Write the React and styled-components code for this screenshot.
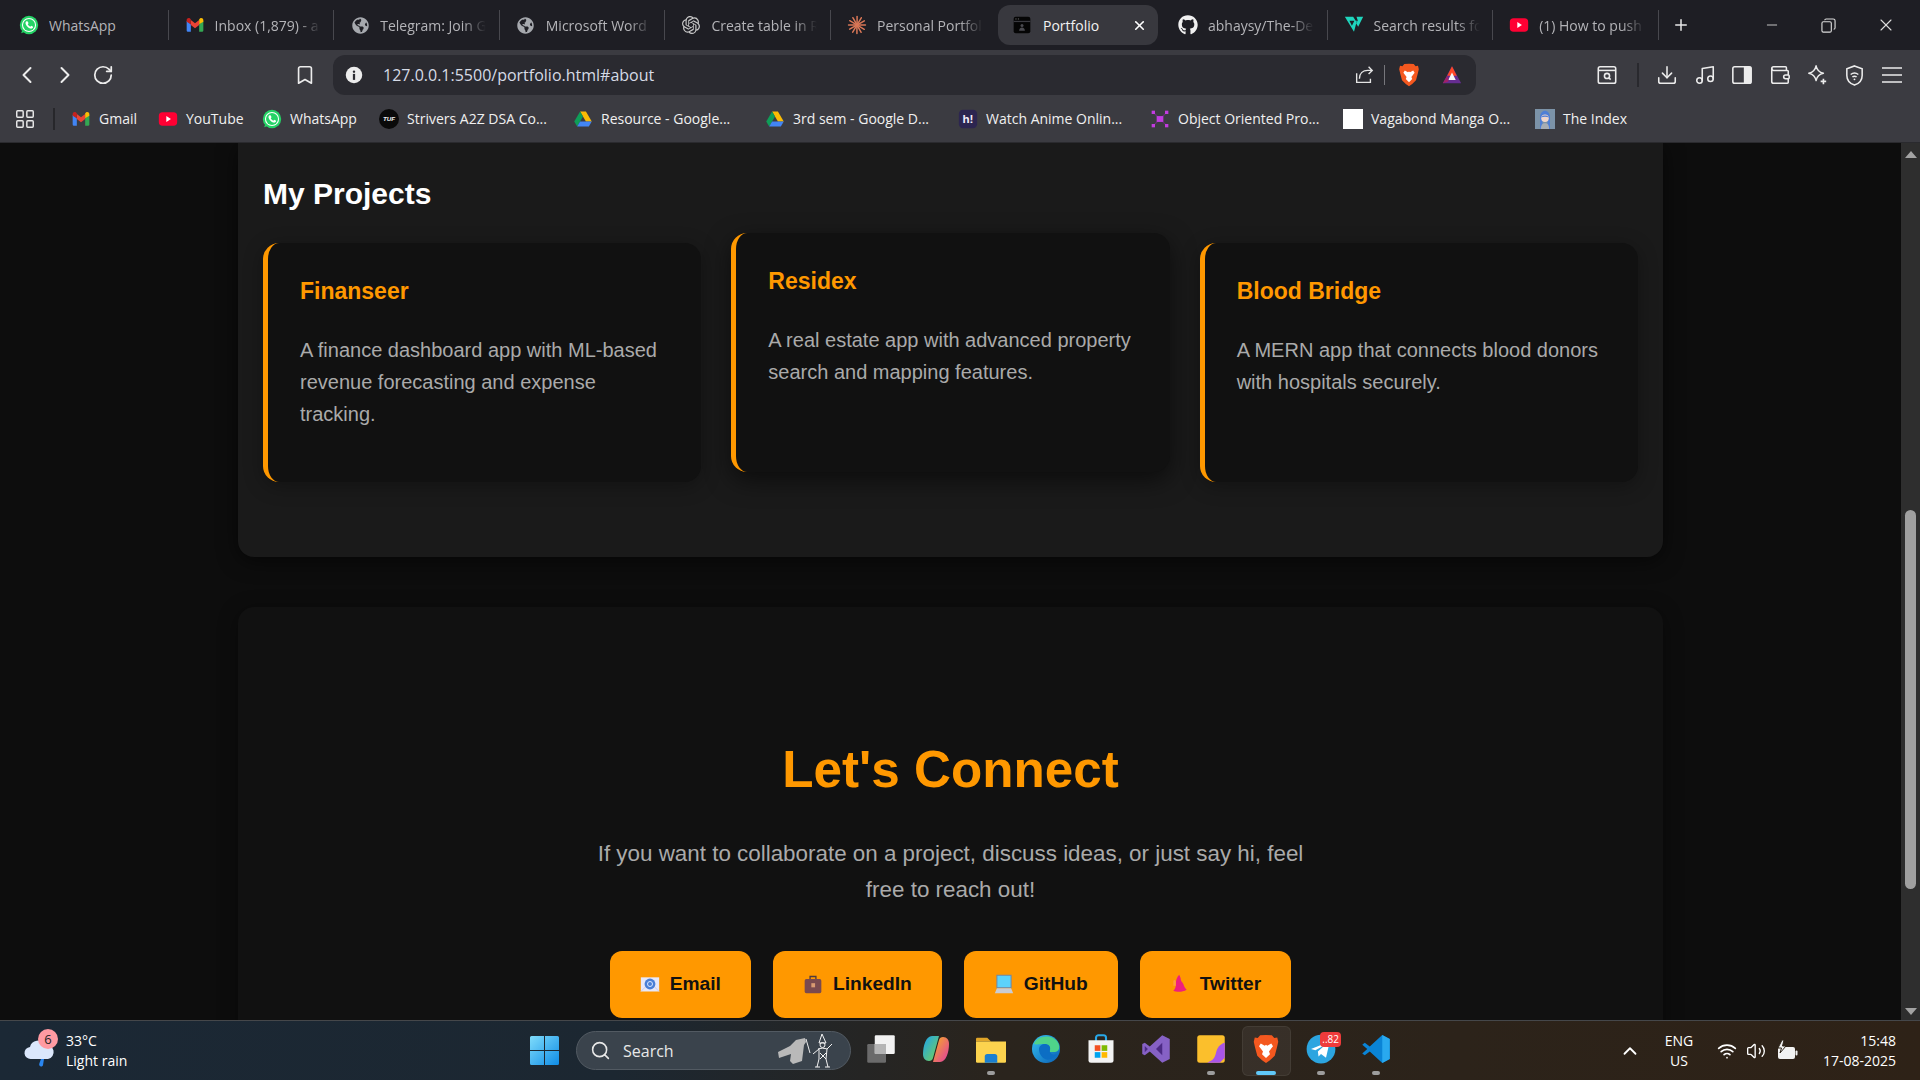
import React from "react";
import styled, { createGlobalStyle } from "styled-components";
import { ChevronLeft, ChevronRight, RotateCw, Bookmark, Download, Music, Wallet, Wifi, Volume2, ChevronUp, Search, Plus, X, Minus, LayoutGrid } from "lucide-react";
import { FaWhatsapp, FaGithub, FaGlobeAmericas } from "react-icons/fa";
import { SiOpenai } from "react-icons/si";

const Global = createGlobalStyle`
  html, body { margin: 0; padding: 0; background: #0d0d0d; overflow: hidden; }
  * { box-sizing: border-box; }
`;

const CHROME = `"Open Sans", "Noto Sans", sans-serif`;
const PAGE = `"Liberation Sans", Arial, sans-serif`;
const ORANGE = "#ff9800";

const Screen = styled.div`
  width: 1920px; height: 1080px; display: flex; flex-direction: column; overflow: hidden;
  font-family: ${CHROME};
`;

/* ---------- tabs ---------- */
const TabStrip = styled.div`
  height: 50px; flex: none; background: #1e1e24; display: flex; align-items: center; padding-left: 3px;
`;
const Tab = styled.div`
  position: relative; flex: none; height: 40px; display: flex; align-items: center;
  width: ${p => (p.$active ? "160px" : "165.6px")};
  margin: ${p => (p.$active ? "0 4px 0 1.4px" : "0")};
  padding-left: ${p => (p.$active ? "14px" : "16px")};
  gap: ${p => (p.$active ? "11px" : "10px")};
  background: ${p => (p.$active ? "#38383e" : "transparent")};
  border-radius: ${p => (p.$active ? "12px" : "0")};
  color: ${p => (p.$active ? "#f2f2f2" : "#b4b4b8")};
  font-size: 14px;
  &::after {
    content: "";
    display: ${p => (p.$sep ? "block" : "none")};
    position: absolute; right: 0; top: 5px; bottom: 5px; width: 1px; background: #48484e;
  }
`;
const TabTitle = styled.span`
  width: 106px; flex: none; white-space: nowrap; overflow: hidden;
  -webkit-mask-image: ${p => (p.$fade ? "linear-gradient(90deg,#000 78%,transparent 100%)" : "none")};
  mask-image: ${p => (p.$fade ? "linear-gradient(90deg,#000 78%,transparent 100%)" : "none")};
`;
const ActiveTitle = styled.span`
  flex: 1; white-space: nowrap;
`;
const TabClose = styled.span`
  display: flex; margin-right: 11px; color: #fff;
`;
const NewTab = styled.div`
  margin-left: 13px; display: flex; color: #e8e8e8;
`;
const WinControls = styled.div`
  margin-left: auto; display: flex; align-items: center; color: #dcdcdc; padding-right: 6px;
`;
const WinButton = styled.div`
  width: 57px; display: flex; justify-content: center;
`;
const Fav = styled.span`
  flex: none; width: 20px; height: 20px; display: flex; align-items: center; justify-content: center;
`;

/* ---------- toolbar ---------- */
const Toolbar = styled.div`
  height: 45px; flex: none; background: #3b3b41; display: flex; align-items: flex-end; padding-left: 8px; padding-right: 9px;
`;
const ToolSlot = styled.div`
  width: ${p => p.$w || "38px"}; height: 40px; flex: none; display: flex; align-items: center; justify-content: center; color: #ececec;
`;
const BookmarkSlot = styled(ToolSlot)`
  width: 22px; margin-left: 173px; margin-right: 17px;
`;
const UrlBar = styled.div`
  width: 1143px; height: 40px; flex: none; background: #2a2a30; border-radius: 12px;
  display: flex; align-items: center; padding: 0 12px 0 11px; color: #e4e4e4;
`;
const UrlText = styled.div`
  flex: 1; margin-left: 19px; font-size: 16px; color: #d6dbe6; white-space: nowrap;
`;
const UrlDivider = styled.span`
  width: 1px; height: 20px; background: #77777c; margin: 0 12px 0 9px;
`;
const BatSlot = styled(Fav)`
  width: 24px; height: 24px; margin-left: 19px;
`;
const LionSlot = styled(Fav)`
  width: 24px; height: 24px;
`;
const ToolRight = styled.div`
  margin-left: auto; display: flex; align-items: center; height: 40px;
`;
const ToolDivider = styled.span`
  width: 2px; height: 24px; background: #29292e; margin: 0 10px 0 10.5px;
`;

/* ---------- bookmarks ---------- */
const BookmarkBar = styled.div`
  height: 48px; flex: none; background: #3b3b41; display: flex; align-items: center; padding-left: 14px;
  border-bottom: 1px solid #2a2a2e; color: #f0f0f0; font-size: 14px;
`;
const AppsSlot = styled.span`
  width: 22px; display: flex; color: #e8e8e8;
`;
const BarDivider = styled.span`
  width: 2px; height: 22px; background: #27272b; margin: 0 16px 0 17px;
`;
const BookmarkItem = styled.div`
  width: ${p => p.$w}px; flex: none; display: flex; align-items: center; gap: 8px; white-space: nowrap;
`;

/* ---------- page ---------- */
const Viewport = styled.div`
  flex: 1; min-height: 0; display: flex; overflow: hidden; background: #0d0d0d; font-family: ${PAGE};
`;
const Page = styled.main`
  flex: 1; min-width: 0; line-height: 1.6; display: flex; flex-direction: column; align-items: center;
`;
const ProjectsPanel = styled.section`
  width: 1425px; flex: none; background: #1a1a1a; border-radius: 0 0 16px 16px; padding: 27px 25px 75px;
  box-shadow: 0 4px 20px rgba(0,0,0,.55);
`;
const SectionTitle = styled.h2`
  margin: 0 0 25px; color: #fff; font-size: 30px; font-weight: 700;
`;
const CardGrid = styled.div`
  display: grid; grid-template-columns: repeat(3, 1fr); gap: 30px;
`;
const Card = styled.article`
  height: 239px; background: #111; border-left: 5px solid ${ORANGE}; border-radius: 16px; padding: 30px 32px;
  box-shadow: ${p => (p.$raised ? "0 8px 24px rgba(0,0,0,.55)" : "0 4px 20px rgba(0,0,0,.3)")};
  transform: ${p => (p.$raised ? "translateY(-10px)" : "none")};
`;
const CardTitle = styled.h3`
  margin: 0 0 24px; color: ${ORANGE}; font-size: 23px; font-weight: 700;
`;
const CardText = styled.p`
  margin: 0; color: #aaa; font-size: 20px;
`;
const ConnectPanel = styled.section`
  width: 1425px; flex: none; margin-top: 50px; background: #111; border-radius: 16px; padding: 122px 25px 40px;
  box-shadow: 0 4px 20px rgba(0,0,0,.4); display: flex; flex-direction: column; align-items: center;
`;
const ConnectTitle = styled.h2`
  margin: 0 0 25px; color: ${ORANGE}; font-size: 51.2px; font-weight: 700;
`;
const ConnectText = styled.p`
  margin: 0 0 43px; width: 750px; text-align: center; color: #aaa; font-size: 22.4px;
`;
const ButtonRow = styled.div`
  display: flex; justify-content: center; gap: 22px;
`;
const ConnectButton = styled.a`
  height: 67px; padding: 0 30px; display: flex; align-items: center; gap: 10px; background: ${ORANGE};
  color: #111; border-radius: 12px; font-size: 19.2px; font-weight: 700;
`;

/* ---------- scrollbar ---------- */
const Scrollbar = styled.div`
  width: 19px; flex: none; background: #2e2e2e; display: flex; flex-direction: column; align-items: center;
`;
const ArrowUp = styled.span`
  margin-top: 8px; width: 0; height: 0; border-left: 6.5px solid transparent; border-right: 6.5px solid transparent; border-bottom: 7px solid #a3a3a3;
`;
const ArrowDown = styled.span`
  margin-top: auto; margin-bottom: 5px; width: 0; height: 0; border-left: 6.5px solid transparent; border-right: 6.5px solid transparent; border-top: 7px solid #a3a3a3;
`;
const Thumb = styled.div`
  margin-top: 352px; width: 11px; height: 379px; border-radius: 6px; background: #a0a0a0;
`;

/* ---------- taskbar ---------- */
const Taskbar = styled.footer`
  height: 60px; flex: none; display: flex; align-items: center; color: #fff;
  background: linear-gradient(90deg,#1b2835 0%,#1c2731 32%,#2a241d 52%,#2e2217 100%);
  border-top: 1px solid #45474a;
`;
const Weather = styled.div`
  width: 530px; flex: none; padding-left: 24px; display: flex; align-items: center; gap: 10px; position: relative;
`;
const WeatherBadge = styled.span`
  position: absolute; left: 38px; top: -2px; width: 20px; height: 20px; border-radius: 50%; background: #ff9aa2; color: #222;
  font-size: 13px; display: flex; align-items: center; justify-content: center;
`;
const WeatherText = styled.div`
  font-size: 14px; line-height: 20px; display: flex; flex-direction: column;
`;
const WinLogoSlot = styled.div`
  width: 29px; height: 29px; flex: none; margin-right: 17px; display: flex;
`;
const SearchPill = styled.div`
  width: 275px; height: 39px; flex: none; margin-right: 2.5px; border-radius: 20px; background: #3a434c; border: 1px solid #525a62;
  display: flex; align-items: center; padding-left: 13px; gap: 12px; font-size: 16px; color: #e8e8e8;
`;
const PillArt = styled.span`
  margin-left: auto; margin-right: 14px; display: flex;
`;
const TaskSlot = styled.div`
  position: relative; width: 55px; height: 50px; flex: none; display: flex; align-items: center; justify-content: center;
  &::before {
    content: ""; display: ${p => (p.$open ? "block" : "none")};
    position: absolute; inset: 0 3px; border-radius: 6px; background: rgba(255,255,255,.06); border: 1px solid rgba(255,255,255,.06);
  }
`;
const TaskGlyph = styled.span`
  position: relative; width: 30px; height: 30px; display: flex; margin-top: -3px;
`;
const TaskDot = styled.span`
  position: absolute; bottom: 1px; left: 50%; transform: translateX(-50%); height: 4px; border-radius: 2px;
  width: ${p => (p.$main ? "20px" : "8px")}; background: ${p => (p.$main ? "#60c8f8" : "#9d9d9d")};
`;
const TgBadge = styled.span`
  position: absolute; top: -2px; right: -5px; min-width: 18px; height: 15px; padding: 0 2px; border-radius: 4px; background: #ef3b3b;
  color: #fff; font-size: 10px; line-height: 15px; text-align: center;
`;
const Tray = styled.div`
  margin-left: auto; padding-right: 24px; display: flex; align-items: center; font-size: 14px;
`;
const Lang = styled.div`
  width: 40px; margin: 0 18px; text-align: center; line-height: 20px;
`;
const TrayIcon = styled.span`
  display: flex; margin-right: ${p => p.$mr}px;
`;
const Clock = styled.div`
  width: 78px; text-align: right; line-height: 20px; white-space: nowrap;
`;

/* ---------- drawings ---------- */
const Svg = ({ s = 20, children, vb = "0 0 24 24" }) => (
  <svg width={s} height={s} viewBox={vb} fill="none" aria-hidden="true">{children}</svg>
);
const Gmail = () => (
  <Svg><path d="M2 20V7l5 4v9H3.5A1.5 1.5 0 0 1 2 18.500z" fill="#4285f4" /><path d="M22 20V7l-5 4v9h3.500A1.500 1.500 0 0 0 22 18.500z" fill="#34a853" /><path d="M7 12V6l5 4 5-4v6l-5 4z" fill="#ea4335" /><path d="M2 8V6c0-2 2.500-3 4-1.800L7 5v6z" fill="#c5221f" /><path d="M22 8V6c0-2-2.500-3-4-1.800L17 5v6z" fill="#fbbc04" /></Svg>
);
const WhatsApp = () => (
  <Svg><circle cx="12" cy="12" r="11" fill="#25d366" /><path d="M2.500 22l2-5 3 3z" fill="#25d366" /><circle cx="12" cy="12" r="8.500" fill="#fff" /><circle cx="12" cy="12" r="7.200" fill="#25d366" /><path d="M8.700 7.500c-1 1-1.200 2.500-.3 4.300 1 2 3 3.800 5 4.500 1.500.5 2.800 0 3.500-1.200l-.3-1.200-2-1-1 1.100c-1.300-.5-2.500-1.700-3.100-3l.9-1-.8-2.300z" fill="#fff" /></Svg>
);
const YouTube = ({ s = 20 }) => (
  <Svg s={s}><rect x="1" y="4" width="22" height="16" rx="4.500" fill="#ff0033" /><path d="M10 8.500l5.500 3.500L10 15.500z" fill="#fff" /></Svg>
);
const Globe = () => <FaGlobeAmericas size={17} color="#a6a9ae" />;
const Claude = () => (
  <Svg>{[0, 30, 60, 90, 120, 150, 180, 210, 240, 270, 300, 330].map(a => (
    <rect key={a} x="11.200" y="1" width="1.800" height="11" rx=".9" fill="#d97757" transform={`rotate(${a} 12 12)`} />
  ))}</Svg>
);
const PortfolioFav = () => (
  <Svg><rect x="2" y="2" width="20" height="20" rx="2.500" fill="#050505" /><rect x="2" y="7" width="20" height="1.500" fill="#3a3a40" /><rect x="4" y="4" width="1.500" height="1.500" fill="#555" /><rect x="7" y="4" width="1.500" height="1.500" fill="#555" /><circle cx="12" cy="12.500" r="1.800" fill="#4a4a50" /><path d="M8.500 19c0-2.500 1.500-4 3.500-4s3.500 1.500 3.500 4z" fill="#4a4a50" /></Svg>
);
const Frontend = () => (
  <Svg><path d="M1 2h10l3 5H6.500l3 6 3-6h3L12 20z" fill="#1fd5bd" /><path d="M15 2h8l-6 12-2.500-4 2-3.500z" fill="#1fd5bd" /></Svg>
);
const Drive = () => (
  <Svg><path d="M8.500 3h7l7 12h-7z" fill="#fbbc04" /><path d="M8.500 3L1.500 15l3.500 6 7-12z" fill="#0f9d58" /><path d="M5 21h14l3.500-6h-14z" fill="#4285f4" /></Svg>
);
const Tuf = () => (
  <Svg><circle cx="12" cy="12" r="12" fill="#0a0a0a" /><text x="12" y="14.500" fontSize="7.500" fontWeight="700" fontStyle="italic" textAnchor="middle" fill="#f2f2f2" fontFamily="Liberation Sans">TUF</text></Svg>
);
const HiAnime = () => (
  <Svg><rect x="1" y="1" width="22" height="22" rx="5" fill="#2c2550" /><text x="12" y="17" fontSize="14" fontWeight="700" textAnchor="middle" fill="#f3eefb" fontFamily="Liberation Sans">h!</text></Svg>
);
const Nodes = () => (
  <Svg>
    <path d="M4 4l16 16M20 4L4 20" stroke="#6b2a7a" strokeWidth="1.500" />
    <rect x="8" y="8.500" width="8" height="7" fill="#c23ce0" />
    {[[2, 2], [18, 2], [2, 18], [18, 18]].map(([x, y]) => <rect key={x + "" + y} x={x} y={y} width="4" height="4" fill="#c23ce0" />)}
  </Svg>
);
const WhiteBox = () => <Svg><rect x="0" y="0" width="24" height="24" fill="#fff" /></Svg>;
const Avatar = () => (
  <Svg><rect width="24" height="24" fill="#7c93a8" /><path d="M6 24V10c0-5 3-8 6-8s6 3 6 8v14h-3V12H9v12z" fill="#4f7fd6" /><circle cx="12" cy="11" r="4.500" fill="#f0d6cc" /><path d="M7 24c0-5 2-7 5-7s5 2 5 7z" fill="#a7adb5" /><path d="M7.500 10c1-3 8-3 9 0-3-1-6-1-9 0z" fill="#4f7fd6" /></Svg>
);
const Brave = ({ s = 24 }) => (
  <Svg s={s}>
    <path d="M12 .8L7.300 1 5.400 3.200 3 2.800l-.8 3.400 1 4.300L5 17.300l3.800 3.600L12 23.200l3.200-2.300 3.800-3.600 1.800-6.800 1-4.300-.8-3.400-2.400.4L16.700 1z" fill="#f4581f" />
    <path d="M7.800 7.500L11 9.300l1-.8 1 .8 3.200-1.800 1.400 2.200-3.200 4.200.8 2.200L12 19.200l-3.200-3.100.8-2.200-3.200-4.200z" fill="#fff" />
  </Svg>
);
const Bat = () => (
  <Svg><path d="M12 1.500L1 22h22z" fill="#662d91" /><path d="M12 1.500L6.300 13h11.400z" fill="#ff4724" /><path d="M12 9l-4.500 9h9z" fill="#f6f6f6" /><path d="M1 22l5.300-9L8 18l-1 2z" fill="#a02068" /></Svg>
);
const ShareArrow = () => (
  <Svg s={22}><path d="M4 10v10h15v-4" stroke="#e4e4e4" strokeWidth="1.500" /><path d="M7 16c0-6 4-9 9-9h5M17 3l4 4-4 4" stroke="#e4e4e4" strokeWidth="1.500" /></Svg>
);
const Capture = () => (
  <Svg s={22}><rect x="2.500" y="3" width="19" height="18" rx="2" stroke="#ececec" strokeWidth="1.700" /><path d="M3 7h18" stroke="#ececec" strokeWidth="1.700" /><circle cx="12" cy="13" r="2.800" stroke="#ececec" strokeWidth="1.700" /><path d="M14 15l2 2" stroke="#ececec" strokeWidth="1.700" /></Svg>
);
const SidePanel = () => (
  <Svg s={22}><rect x="2" y="3" width="20" height="18" rx="2" stroke="#ececec" strokeWidth="1.700" /><rect x="14" y="3" width="8" height="18" fill="#ececec" /></Svg>
);
const Leo = () => (
  <Svg s={22}><path d="M11 2c1 5 3 7 8 8-5 1-7 3-8 8-1-5-3-7-8-8 5-1 7-3 8-8z" stroke="#ececec" strokeWidth="1.600" strokeLinejoin="round" /><path d="M19 16v6M16 19h6" stroke="#ececec" strokeWidth="1.800" /></Svg>
);
const ShieldWifi = () => (
  <Svg s={23}><path d="M12 2l8 3v7c0 5-3.500 8.500-8 10-4.500-1.500-8-5-8-10V5z" stroke="#ececec" strokeWidth="1.600" /><path d="M8 11c2.500-2 5.500-2 8 0M9.800 13.500c1.400-1 3-1 4.400 0" stroke="#ececec" strokeWidth="1.500" /><circle cx="12" cy="16" r="1" fill="#ececec" /></Svg>
);
const MenuLines = () => (
  <Svg s={24}><path d="M2 5h20M2 12h20M2 19h20" stroke="#ececec" strokeWidth="1.600" /></Svg>
);
const RestoreWin = () => (
  <Svg s={15} vb="0 0 16 16"><rect x="1" y="4" width="10" height="11" rx="1.500" stroke="#dcdcdc" strokeWidth="1.200" /><path d="M4 2.500c0-1 .6-1.500 1.500-1.500H13c1 0 2 1 2 2v7.500c0 1-.5 1.500-1.500 1.500" stroke="#dcdcdc" strokeWidth="1.200" /></Svg>
);
const InfoDot = () => (
  <Svg s={18}><circle cx="12" cy="12" r="11" fill="#ececec" /><circle cx="12" cy="7.500" r="1.600" fill="#2a2a30" /><rect x="10.500" y="10.500" width="3" height="8" fill="#2a2a30" /></Svg>
);
const MailEmoji = () => (
  <Svg><rect x="1" y="4" width="22" height="17" fill="#e8e8f8" /><path d="M1 21l8-8M23 21l-8-8" stroke="#c8c8e4" /><circle cx="12" cy="12" r="6.500" fill="#4a7fd6" /><circle cx="12" cy="12" r="3" stroke="#d8e6ff" strokeWidth="1.200" /></Svg>
);
const BagEmoji = () => (
  <Svg><path d="M8.500 6V3h7v3" stroke="#4e3a3e" strokeWidth="1.600" /><rect x="2" y="6" width="20" height="17" rx="2" fill="#7a4a4e" /><rect x="10" y="11" width="4.500" height="5" fill="#d99a72" /></Svg>
);
const LaptopEmoji = () => (
  <Svg><rect x="3.500" y="1.500" width="17" height="15" fill="#5cd2fb" stroke="#6f86a6" strokeWidth="1.200" /><path d="M1 23l2.500-6h17l2.500 6z" fill="#c9ccd4" /></Svg>
);
const BirdEmoji = () => (
  <Svg><path d="M11 1c-3 3-4 7-4 11s-1 6-3 8c4 2 11 2 16-1-2-2-3-4-4-7-1-2-3-3-3-5 0-2-1-4-2-6z" fill="#ee1f7d" /><path d="M4 8c1-1 2-1 3 0v6H4z" fill="#ff9d3c" /></Svg>
);
const WinLogo = () => (
  <svg width="29" height="29" viewBox="0 0 29 29" aria-hidden="true">
    <defs><linearGradient id="wl" x1="0" y1="0" x2="1" y2="1"><stop offset="0" stopColor="#7fdcfb" /><stop offset="1" stopColor="#0f8ce6" /></linearGradient></defs>
    <path d="M0 1.500A1.500 1.500 0 0 1 1.500 0H14v14H0zM15 0h12.500A1.500 1.500 0 0 1 29 1.500V14H15zM0 15h14v14H1.500A1.500 1.500 0 0 1 0 27.500zM15 15h14v12.500a1.500 1.500 0 0 1-1.500 1.500H15z" fill="url(#wl)" />
  </svg>
);
const WeatherGlyph = () => (
  <svg width="32" height="36" viewBox="0 0 32 36" aria-hidden="true">
    <path d="M17 26l3 0-1 6c-.3 1.500-1.700 2-3 1-1-.7-1-1.800-.5-3z" fill="#2a86f0" />
    <path d="M7 26a6 6 0 0 1-1-12 8 8 0 0 1 15-2 7 7 0 0 1 3 14z" fill="#dbe7fb" />
  </svg>
);
const PillDrawing = () => (
  <svg width="60" height="36" viewBox="0 0 60 36" aria-hidden="true">
    <path d="M2 19l12-6 6-6 9-2 1 4-2 3-2 16-9 3-3-3 1-7-12 4z" fill="#b9b9b9" />
    <path d="M30 6l4 14" stroke="#eee" />
    <path d="M46 1l4 9h-7z" fill="none" stroke="#f2f2f2" />
    <circle cx="46.500" cy="12" r="2.500" fill="none" stroke="#f2f2f2" />
    <path d="M42 16c2-1 7-1 9 0l-1 10 2 8M43 16l0 10-2 8M37 21l6-5M51 16l5-5M39 34h5M49 34h5M44 20l6 6M50 20l-6 6" stroke="#f2f2f2" fill="none" />
  </svg>
);
const TaskView = () => (
  <Svg s={30}><rect x="1" y="8" width="15" height="15" rx="1" fill="#6b6b6b" /><rect x="7" y="1" width="16" height="15" rx="1" fill="#f2f2f2" /><rect x="7" y="8" width="9" height="8" fill="#b5b5b5" /></Svg>
);
const Copilot = () => (
  <svg width="30" height="30" viewBox="0 0 30 30" aria-hidden="true">
    <defs>
      <linearGradient id="cpa" x1="0" y1="0" x2="1" y2="1"><stop offset="0" stopColor="#1aa3f0" /><stop offset="1" stopColor="#7cd34e" /></linearGradient>
      <linearGradient id="cpb" x1="0" y1="0" x2="1" y2="1"><stop offset="0" stopColor="#f7b21d" /><stop offset="1" stopColor="#e13aa5" /></linearGradient>
    </defs>
    <path d="M11 2h7l-6 22c-.5 2-2 3-4 3-4 0-6-3-6-7 0-8 3-18 9-18z" fill="url(#cpa)" />
    <path d="M19 28h-7l6-22c.5-2 2-3 4-3 4 0 6 3 6 7 0 8-3 18-9 18z" fill="url(#cpb)" />
  </svg>
);
const Folder = () => (
  <Svg s={30}><path d="M0 4a1 1 0 0 1 1-1h8l3 3h-12z" fill="#e0a528" /><path d="M0 6h24v16a1 1 0 0 1-1 1H1a1 1 0 0 1-1-1z" fill="#fcd34e" /><path d="M7 23v-5a2 2 0 0 1 2-2h6a2 2 0 0 1 2 2v5z" fill="#1a7fd0" /></Svg>
);
const Edge = () => (
  <svg width="30" height="30" viewBox="0 0 30 30" aria-hidden="true">
    <defs><linearGradient id="eg" x1="0" y1="0" x2="1" y2="1"><stop offset="0" stopColor="#35c1f1" /><stop offset="1" stopColor="#0a5fb5" /></linearGradient></defs>
    <circle cx="15" cy="15" r="14" fill="url(#eg)" />
    <path d="M3 10C6 1 24-1 28 11c1 4-1 7-4 7h-6c2-3 1-8-5-8-4 0-7 1-10 0z" fill="#4fd38a" />
    <path d="M8 15c0-3 3-5 6-5 3 0 6 2 5 6-1 3 3 6 7 4-2 4-8 7-12 5-4-2-6-6-6-10z" fill="#0c6ec4" />
  </svg>
);
const Store = () => (
  <Svg s={30}><path d="M8 6V3a2 2 0 0 1 2-2h4a2 2 0 0 1 2 2v3" stroke="#28a8e8" strokeWidth="1.700" /><path d="M2 5h20v16a2 2 0 0 1-2 2H4a2 2 0 0 1-2-2z" fill="#f3f3f3" /><rect x="7" y="9" width="4.500" height="4.500" fill="#f25022" /><rect x="12.500" y="9" width="4.500" height="4.500" fill="#7fba00" /><rect x="7" y="14.500" width="4.500" height="4.500" fill="#00a4ef" /><rect x="12.500" y="14.500" width="4.500" height="4.500" fill="#ffb900" /></Svg>
);
const VisualStudio = () => (
  <Svg s={30}><path d="M17 1l6 3v16l-6 3L7 14l-4 3-2-1V8l2-1 4 3z" fill="#8661c5" /><path d="M17 7l-5 5 5 5z" fill="#4c2a85" /><path d="M3 9.500v5l2.500-2.500z" fill="#4c2a85" /></Svg>
);
const Sticky = () => (
  <Svg s={30}><rect x="1" y="1" width="22" height="22" rx="2" fill="#fbbf2c" /><path d="M23 7v12l-4 4H9c4-2 6-3 7-8 1-4 3-7 7-8z" fill="#a855e8" /></Svg>
);
const Telegram = () => (
  <Svg s={30}><circle cx="12" cy="12" r="11.500" fill="#2ca5e0" /><path d="M4 12l15-6-3 13-4-3-2 2-.5-4 6-5.500-8 4.500z" fill="#fff" /></Svg>
);
const VsCode = () => (
  <Svg s={30}><path d="M17 .8L23 4v16l-6 3.200L7 14l-4 3-2-1.500L5 12 1 8.500 3 7l4 3z" fill="#0a84d6" /><path d="M17 .8L23 4v16l-6 3.200z" fill="#29a9ef" /><path d="M17 7l-6 5 6 5z" fill="#1e1e24" opacity="0" /></Svg>
);
const Battery = () => (
  <Svg s={24}><rect x="3" y="8" width="17" height="12" rx="2" fill="#f2f2f2" /><rect x="20.500" y="11.500" width="2" height="5" rx="1" fill="#f2f2f2" /><path d="M7 1L3 9h3.500L5 14l6-7H7.500L9 1z" fill="#f2f2f2" stroke="#2d2419" strokeWidth="1" /></Svg>
);

/* ---------- data ---------- */
const tabs = [
  { t: "WhatsApp", i: <WhatsApp />, sep: true },
  { t: "Inbox (1,879) - a", i: <Gmail />, sep: true, fade: true },
  { t: "Telegram: Join Gr", i: <Globe />, sep: true, fade: true },
  { t: "Microsoft Word", i: <Globe />, sep: true, fade: true },
  { t: "Create table in Re", i: <SiOpenai size={18} color="#c8c8c8" />, sep: true, fade: true },
  { t: "Personal Portfolio", i: <Claude />, fade: true },
  { t: "Portfolio", i: <PortfolioFav />, active: true },
  { t: "abhaysy/The-Des", i: <FaGithub size={20} color="#f0f0f0" />, sep: true, fade: true },
  { t: "Search results for", i: <Frontend />, sep: true, fade: true },
  { t: "(1) How to push", i: <YouTube />, sep: true, fade: true },
];
const bookmarks = [
  { t: "Gmail", i: <Gmail />, w: 87 },
  { t: "YouTube", i: <YouTube />, w: 104 },
  { t: "WhatsApp", i: <WhatsApp />, w: 117 },
  { t: "Strivers A2Z DSA Co...", i: <Tuf />, w: 194 },
  { t: "Resource - Google...", i: <Drive />, w: 192 },
  { t: "3rd sem - Google D...", i: <Drive />, w: 193 },
  { t: "Watch Anime Onlin...", i: <HiAnime />, w: 192 },
  { t: "Object Oriented Pro...", i: <Nodes />, w: 193 },
  { t: "Vagabond Manga O...", i: <WhiteBox />, w: 192 },
  { t: "The Index", i: <Avatar />, w: 90 },
];
const projects = [
  { t: "Finanseer", d: "A finance dashboard app with ML-based revenue forecasting and expense tracking." },
  { t: "Residex", d: "A real estate app with advanced property search and mapping features.", raised: true },
  { t: "Blood Bridge", d: "A MERN app that connects blood donors with hospitals securely." },
];
const links = [
  { t: "Email", i: <MailEmoji /> },
  { t: "LinkedIn", i: <BagEmoji /> },
  { t: "GitHub", i: <LaptopEmoji /> },
  { t: "Twitter", i: <BirdEmoji /> },
];
const dock = [
  { i: <TaskView /> },
  { i: <Copilot /> },
  { i: <Folder />, dot: true },
  { i: <Edge /> },
  { i: <Store /> },
  { i: <VisualStudio /> },
  { i: <Sticky />, dot: true },
  { i: <Brave s={30} />, dot: true, open: true },
  { i: <Telegram />, dot: true, badge: "..82" },
  { i: <VsCode />, dot: true },
];

export default function App() {
  return (
    <Screen>
      <Global />
      <TabStrip>
        {tabs.map(x => (
          <Tab key={x.t} $active={x.active} $sep={x.sep}>
            <Fav>{x.i}</Fav>
            {x.active ? (
              <>
                <ActiveTitle>{x.t}</ActiveTitle>
                <TabClose><X size={15} strokeWidth={2.6} /></TabClose>
              </>
            ) : (
              <TabTitle $fade={x.fade}>{x.t}</TabTitle>
            )}
          </Tab>
        ))}
        <NewTab><Plus size={18} strokeWidth={2} /></NewTab>
        <WinControls>
          <WinButton><Minus size={16} strokeWidth={1.3} /></WinButton>
          <WinButton><RestoreWin /></WinButton>
          <WinButton><X size={20} strokeWidth={1.3} /></WinButton>
        </WinControls>
      </TabStrip>

      <Toolbar>
        <ToolSlot><ChevronLeft size={28} strokeWidth={1.7} /></ToolSlot>
        <ToolSlot><ChevronRight size={28} strokeWidth={1.7} /></ToolSlot>
        <ToolSlot $w="37px"><RotateCw size={22} strokeWidth={1.9} /></ToolSlot>
        <BookmarkSlot><Bookmark size={22} strokeWidth={1.8} /></BookmarkSlot>
        <UrlBar>
          <Fav><InfoDot /></Fav>
          <UrlText>127.0.0.1:5500/portfolio.html#about</UrlText>
          <ShareArrow />
          <UrlDivider />
          <LionSlot><Brave /></LionSlot>
          <BatSlot><Bat /></BatSlot>
        </UrlBar>
        <ToolRight>
          <ToolSlot $w="37.5px"><Capture /></ToolSlot>
          <ToolDivider />
          <ToolSlot $w="37.5px"><Download size={22} strokeWidth={1.7} /></ToolSlot>
          <ToolSlot $w="37.5px"><Music size={22} strokeWidth={1.7} /></ToolSlot>
          <ToolSlot $w="37.5px"><SidePanel /></ToolSlot>
          <ToolSlot $w="37.5px"><Wallet size={22} strokeWidth={1.7} /></ToolSlot>
          <ToolSlot $w="37.5px"><Leo /></ToolSlot>
          <ToolSlot $w="37.5px"><ShieldWifi /></ToolSlot>
          <ToolSlot $w="37.5px"><MenuLines /></ToolSlot>
        </ToolRight>
      </Toolbar>

      <BookmarkBar>
        <AppsSlot><LayoutGrid size={22} strokeWidth={1.6} /></AppsSlot>
        <BarDivider />
        {bookmarks.map(b => (
          <BookmarkItem key={b.t} $w={b.w}>
            <Fav>{b.i}</Fav>
            <span>{b.t}</span>
          </BookmarkItem>
        ))}
      </BookmarkBar>

      <Viewport>
        <Page>
          <ProjectsPanel>
            <SectionTitle>My Projects</SectionTitle>
            <CardGrid>
              {projects.map(p => (
                <Card key={p.t} $raised={p.raised}>
                  <CardTitle>{p.t}</CardTitle>
                  <CardText>{p.d}</CardText>
                </Card>
              ))}
            </CardGrid>
          </ProjectsPanel>
          <ConnectPanel>
            <ConnectTitle>Let's Connect</ConnectTitle>
            <ConnectText>If you want to collaborate on a project, discuss ideas, or just say hi, feel free to reach out!</ConnectText>
            <ButtonRow>
              {links.map(l => (
                <ConnectButton key={l.t}>{l.i}<span>{l.t}</span></ConnectButton>
              ))}
            </ButtonRow>
          </ConnectPanel>
        </Page>
        <Scrollbar>
          <ArrowUp />
          <Thumb />
          <ArrowDown />
        </Scrollbar>
      </Viewport>

      <Taskbar>
        <Weather>
          <WeatherGlyph />
          <WeatherBadge>6</WeatherBadge>
          <WeatherText><span>33°C</span><span>Light rain</span></WeatherText>
        </Weather>
        <WinLogoSlot><WinLogo /></WinLogoSlot>
        <SearchPill>
          <Search size={21} strokeWidth={1.8} />
          <span>Search</span>
          <PillArt><PillDrawing /></PillArt>
        </SearchPill>
        {dock.map((d, idx) => (
          <TaskSlot key={idx} $open={d.open}>
            <TaskGlyph>
              {d.i}
              {d.badge && <TgBadge>{d.badge}</TgBadge>}
            </TaskGlyph>
            {d.dot && <TaskDot $main={d.open} />}
          </TaskSlot>
        ))}
        <Tray>
          <ChevronUp size={22} strokeWidth={2} />
          <Lang>ENG<br />US</Lang>
          <TrayIcon $mr={9}><Wifi size={20} strokeWidth={2} /></TrayIcon>
          <TrayIcon $mr={9}><Volume2 size={20} strokeWidth={1.6} /></TrayIcon>
          <TrayIcon $mr={19}><Battery /></TrayIcon>
          <Clock>15:48<br />17-08-2025</Clock>
        </Tray>
      </Taskbar>
    </Screen>
  );
}
